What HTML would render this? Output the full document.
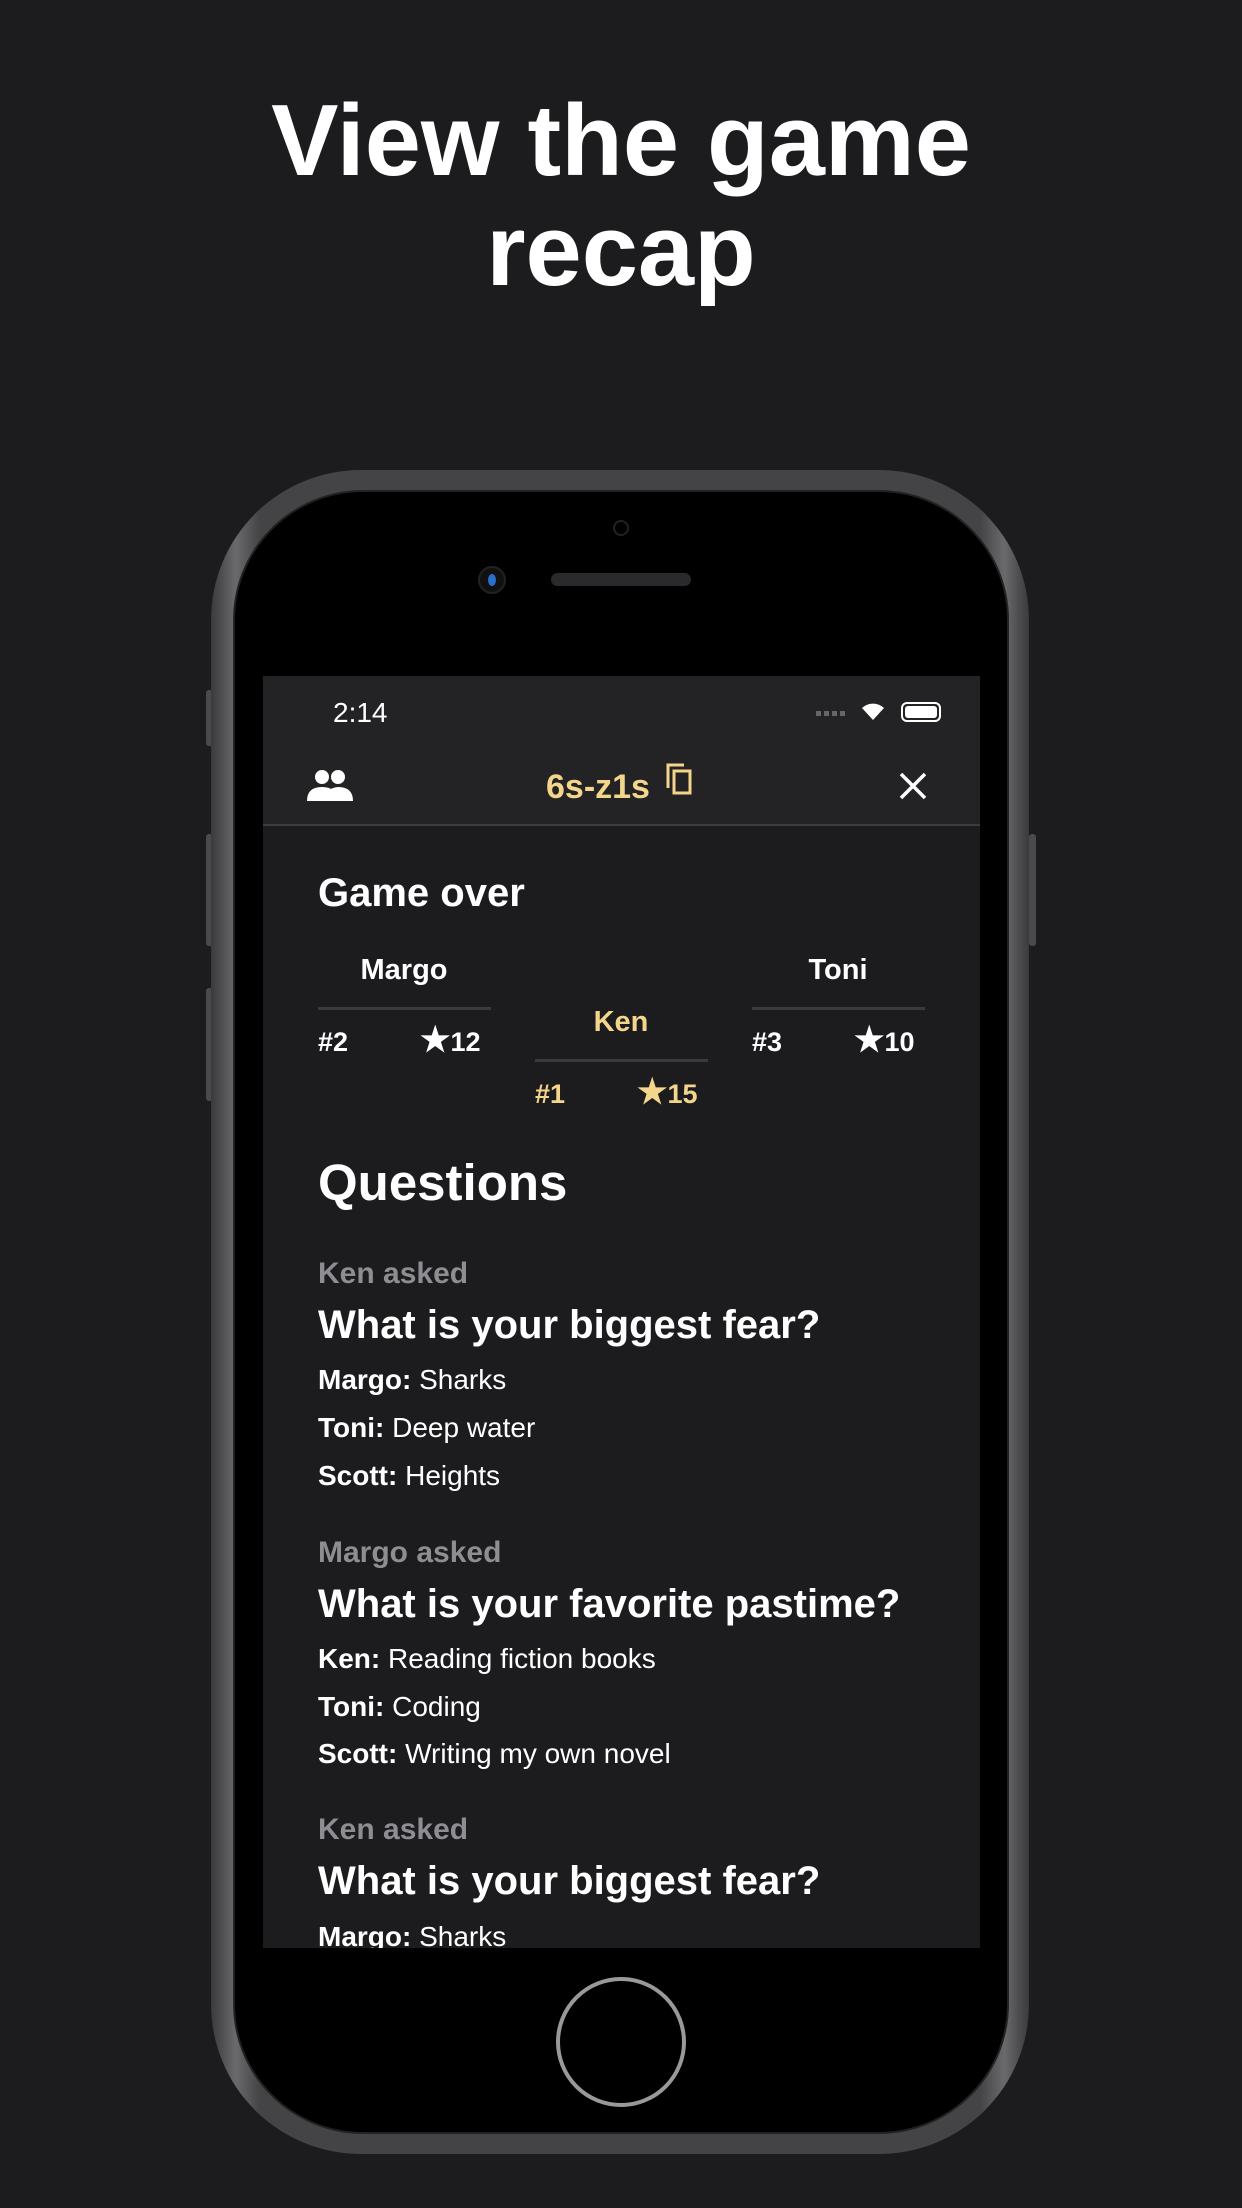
<!DOCTYPE html>
<html><head><meta charset="utf-8"><style>
*{margin:0;padding:0;box-sizing:border-box}
body{width:1242px;height:2208px;background:#1c1c1e;position:relative;overflow:hidden;font-family:"Liberation Sans",sans-serif;color:#fff}
.a{position:absolute;white-space:nowrap}
.c{transform:translateX(-50%)}
.title{left:0;width:1242px;text-align:center;font-weight:bold;font-size:101px;line-height:110px}
.phone{position:absolute;left:211px;top:470px;width:818px;height:1684px;border-radius:150px;background:linear-gradient(90deg,#3a3a3c,#6a6a6c 3%,#444446 6%,#444446 94%,#6a6a6c 97%,#3a3a3c);}
.bezel{position:absolute;left:233px;top:490px;width:776px;height:1644px;border-radius:130px;background:#000;border:2px solid #222}
.screen{position:absolute;left:263px;top:676px;width:717px;height:1272px;background:#1c1c1e;overflow:hidden}
.btn{position:absolute;width:7px;background:#4a4a4c;border-radius:3px}
.gold{color:#f3d58b}
.grey{color:#8d8d92}
.hl{position:absolute;height:3px;background:#3a3a3c}
.ans{font-size:28px;line-height:32px}
.ans b{font-weight:bold}
.q{font-size:40px;font-weight:bold;line-height:44px}
.asked{font-size:30px;font-weight:bold;line-height:34px}
.pn{font-size:29px;font-weight:bold;line-height:34px}
.sc{font-size:27px;font-weight:bold;line-height:32px}
.st{font-size:34px}
</style></head><body>
<div class="a title" style="top:86px">View the game</div>
<div class="a title" style="top:196px">recap</div>

<div class="btn" style="left:206px;top:690px;height:56px"></div>
<div class="btn" style="left:206px;top:834px;height:112px"></div>
<div class="btn" style="left:206px;top:988px;height:113px"></div>
<div class="btn" style="left:1029px;top:834px;height:112px"></div>
<div class="phone"></div>
<div class="bezel"></div>
<div class="a" style="left:613px;top:520px;width:16px;height:16px;border-radius:50%;border:2px solid #222"></div>
<div class="a" style="left:478px;top:566px;width:28px;height:28px;border-radius:50%;background:#111;border:2px solid #222"><div style="position:absolute;left:8px;top:6px;width:8px;height:12px;border-radius:50%;background:#2a6fc9"></div></div>
<div class="a" style="left:551px;top:573px;width:140px;height:13px;border-radius:7px;background:#2a2a2c"></div>
<div class="a" style="left:556px;top:1977px;width:130px;height:130px;border-radius:50%;border:4px solid #999"></div>

<div class="screen">
  <div class="a" style="left:0;top:0;width:717px;height:150px;background:#232325;border-bottom:2px solid #3d3d3f"></div>
  <div class="a" style="left:70px;top:20px;font-size:28px;line-height:34px">2:14</div>
  <div class="a" style="left:553px;top:35px;width:30px;height:5px;background:repeating-linear-gradient(90deg,#666 0 5px,transparent 5px 8px)"></div>
  <svg class="a" style="left:597px;top:24px" width="26" height="22" viewBox="0 0 26 22"><path d="M13 20 L2 8 A16 16 0 0 1 24 8 Z" fill="#fff"/></svg>
  <div class="a" style="left:638px;top:26px;width:40px;height:20px;border:2px solid #fff;border-radius:6px;padding:2px"><div style="width:100%;height:100%;background:#fff;border-radius:3px"></div></div>
  <svg class="a" style="left:42px;top:93px" width="50" height="34" viewBox="0 0 50 34"><circle cx="17" cy="8" r="7" fill="#fff"/><circle cx="33" cy="8" r="7" fill="#fff"/><path d="M2 32 Q2 18 17 18 Q32 18 32 32 Z M22 32 V27 Q22 19 33 18 Q48 18 48 32 Z" fill="#fff"/></svg>
  <div class="a gold" style="left:283px;top:91px;font-size:34px;font-weight:bold;line-height:40px">6s-z1s</div>
  <svg class="a" style="left:401px;top:86px" width="30" height="34" viewBox="0 0 30 34"><path d="M4 26 V3 H20" stroke="#f3d58b" stroke-width="3" fill="none"/><rect x="10" y="9" width="16" height="22" stroke="#f3d58b" stroke-width="3" fill="none"/></svg>
  <svg class="a" style="left:635px;top:95px" width="30" height="30" viewBox="0 0 30 30"><path d="M3 3 L27 27 M27 3 L3 27" stroke="#fff" stroke-width="3.5"/></svg>

  <div class="a" style="left:55px;top:194px;font-size:40px;font-weight:bold;line-height:46px">Game over</div>

  <div class="a pn c" style="left:141px;top:277px">Margo</div>
  <div class="hl" style="left:55px;top:331px;width:173px"></div>
  <div class="a sc" style="left:55px;top:350px">#2</div>
  <div class="a sc" style="left:157px;top:348px"><span class="st">★</span>12</div>

  <div class="a pn c gold" style="left:358px;top:329px">Ken</div>
  <div class="hl" style="left:272px;top:383px;width:173px"></div>
  <div class="a sc gold" style="left:272px;top:402px">#1</div>
  <div class="a sc gold" style="left:374px;top:400px"><span class="st">★</span>15</div>

  <div class="a pn c" style="left:575px;top:277px">Toni</div>
  <div class="hl" style="left:489px;top:331px;width:173px"></div>
  <div class="a sc" style="left:489px;top:350px">#3</div>
  <div class="a sc" style="left:591px;top:348px"><span class="st">★</span>10</div>

  <div class="a" style="left:55px;top:477px;font-size:51px;font-weight:bold;line-height:60px">Questions</div>

  <div class="a asked grey" style="left:55px;top:581px">Ken asked</div>
  <div class="a q" style="left:55px;top:627px">What is your biggest fear?</div>
  <div class="a ans" style="left:55px;top:688px"><b>Margo:</b> Sharks</div>
  <div class="a ans" style="left:55px;top:736px"><b>Toni:</b> Deep water</div>
  <div class="a ans" style="left:55px;top:784px"><b>Scott:</b> Heights</div>

  <div class="a asked grey" style="left:55px;top:860px">Margo asked</div>
  <div class="a q" style="left:55px;top:906px">What is your favorite pastime?</div>
  <div class="a ans" style="left:55px;top:967px"><b>Ken:</b> Reading fiction books</div>
  <div class="a ans" style="left:55px;top:1015px"><b>Toni:</b> Coding</div>
  <div class="a ans" style="left:55px;top:1062px"><b>Scott:</b> Writing my own novel</div>

  <div class="a asked grey" style="left:55px;top:1137px">Ken asked</div>
  <div class="a q" style="left:55px;top:1183px">What is your biggest fear?</div>
  <div class="a ans" style="left:55px;top:1245px"><b>Margo:</b> Sharks</div>
</div>
</body></html>
